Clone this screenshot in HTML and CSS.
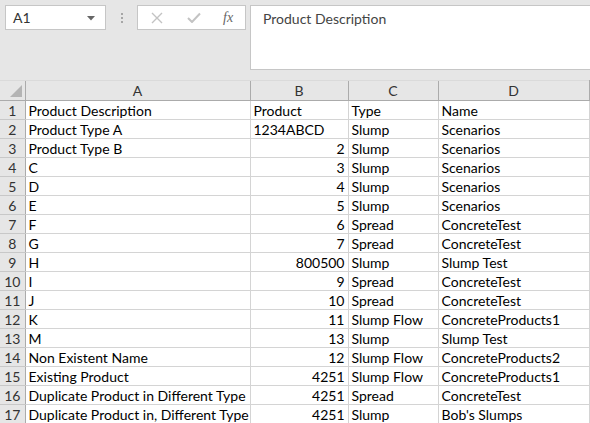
FILE: index.html
```html
<!DOCTYPE html>
<html lang="en">
<head>
    <meta charset="UTF-8">
    <title>Products</title>
    <link rel="stylesheet" href="styles.css">
</head>
<body>
    <div class="formula-bar">
        <div class="name-box">
            <span>A1</span>
            <svg class="arrow" width="8" height="5" viewBox="0 0 8 5"><path d="M0 0 H8 L4 4.5 Z" fill="#666"/></svg>
        </div>
        <div class="grip">
            <i></i><i></i><i></i>
        </div>
        <div class="fx-box">
            <svg width="12" height="12" viewBox="0 0 12 12"><path d="M1 1 L11 11 M11 1 L1 11" stroke="#c3c3c3" stroke-width="1.4" fill="none"/></svg>
            <svg width="14" height="11" viewBox="0 0 14 11"><path d="M1 6 L5 10 L13 1.5" stroke="#c3c3c3" stroke-width="2" fill="none"/></svg>
            <span class="fx">fx</span>
        </div>
        <div class="formula-input">Product Description</div>
    </div>

    <table class="sheet">
        <colgroup>
            <col class="col-rownum">
            <col class="col-a">
            <col class="col-b">
            <col class="col-c">
            <col class="col-d">
        </colgroup>
        <thead>
            <tr>
                <th class="corner"><span class="corner-tri"></span></th>
                <th>A</th>
                <th>B</th>
                <th>C</th>
                <th>D</th>
            </tr>
        </thead>
        <tbody id="rows"></tbody>
    </table>

    <script>
        // Dane arkusza
        const data = [
            ['Product Description', 'Product', 'Type', 'Name'],
            ['Product Type A', '1234ABCD', 'Slump', 'Scenarios'],
            ['Product Type B', 2, 'Slump', 'Scenarios'],
            ['C', 3, 'Slump', 'Scenarios'],
            ['D', 4, 'Slump', 'Scenarios'],
            ['E', 5, 'Slump', 'Scenarios'],
            ['F', 6, 'Spread', 'ConcreteTest'],
            ['G', 7, 'Spread', 'ConcreteTest'],
            ['H', 800500, 'Slump', 'Slump Test'],
            ['I', 9, 'Spread', 'ConcreteTest'],
            ['J', 10, 'Spread', 'ConcreteTest'],
            ['K', 11, 'Slump Flow', 'ConcreteProducts1'],
            ['M', 13, 'Slump', 'Slump Test'],
            ['Non Existent Name', 12, 'Slump Flow', 'ConcreteProducts2'],
            ['Existing Product', 4251, 'Slump Flow', 'ConcreteProducts1'],
            ['Duplicate Product in Different Type', 4251, 'Spread', 'ConcreteTest'],
            ['Duplicate Product in, Different Type', 4251, 'Slump', "Bob's Slumps"]
        ];

        const rows = document.getElementById('rows');
        data.forEach(function(row, i) {
            const tr = document.createElement('tr');
            const num = document.createElement('td');
            num.className = 'rownum';
            num.textContent = i + 1;
            tr.appendChild(num);
            row.forEach(function(value) {
                const td = document.createElement('td');
                // liczby wyrównane do prawej, tekst do lewej
                if (typeof value === 'number') td.className = 'num';
                td.textContent = value;
                tr.appendChild(td);
            });
            rows.appendChild(tr);
        });
    </script>
</body>
</html>
```

FILE: styles.css
```css
body {
    margin: 0;
    background-color: #e6e6e6;
    font-family: Lato, 'Open Sans', sans-serif;
    color: #000;
    overflow: hidden;
}
.formula-bar {
    display: flex;
    align-items: flex-start;
    padding: 5px 0 0 5px;
    height: 75px;
    box-sizing: border-box;
}
.name-box {
    width: 101px;
    height: 25px;
    box-sizing: border-box;
    background-color: white;
    border: 1px solid #c6c6c6;
    display: flex;
    align-items: center;
    justify-content: space-between;
    padding: 0 10px 0 7px;
    font-size: 14px;
    color: #333;
}
.arrow {
    margin-top: 1px;
}
.grip {
    width: 31px;
    height: 25px;
    display: flex;
    flex-direction: column;
    align-items: center;
    justify-content: center;
    gap: 2px;
}
.grip i {
    display: block;
    width: 2px;
    height: 2px;
    background-color: #a6a6a6;
}
.fx-box {
    width: 109px;
    height: 25px;
    box-sizing: border-box;
    background-color: white;
    border: 1px solid #c6c6c6;
    display: flex;
    align-items: center;
    padding: 0 0 0 13px;
    gap: 24px;
}
.fx {
    font-family: 'Liberation Serif', serif;
    font-style: italic;
    font-size: 14px;
    color: #666;
    margin-left: -2px;
}
.formula-input {
    flex: 1;
    margin-left: 4px;
    height: 65px;
    box-sizing: border-box;
    background-color: white;
    border: 1px solid #c6c6c6;
    border-right: none;
    padding: 4px 0 0 12px;
    font-size: 14px;
    color: #444;
}
.sheet {
    border-collapse: collapse;
    table-layout: fixed;
    width: 589px;
    margin-top: 5px;
    font-size: 14px;
}
.col-rownum { width: 25px; }
.col-a { width: 225px; }
.col-b { width: 98px; }
.col-c { width: 90px; }
.col-d { width: 151px; }
.sheet th {
    height: 19px;
    padding: 0;
    font-weight: normal;
    color: #333;
    background-color: #e6e6e6;
    border-left: 1px solid #ababab;
    border-bottom: 1px solid #ababab;
    border-top: 1px solid #dadada;
}
.sheet th:last-child {
    border-right: 1px solid #ababab;
}
.sheet th.corner {
    border-left: none;
    position: relative;
}
.corner-tri {
    position: absolute;
    right: 3px;
    bottom: 3px;
    width: 0;
    height: 0;
    border-left: 12px solid transparent;
    border-bottom: 12px solid #b4b4b4;
}
.sheet td {
    height: 18px;
    padding: 0 3px;
    background-color: white;
    border-right: 1px solid #d4d4d4;
    border-bottom: 1px solid #d4d4d4;
    white-space: nowrap;
    overflow: hidden;
}
.sheet td.num {
    text-align: right;
}
.sheet td.rownum {
    padding: 0;
    text-align: center;
    background-color: #e6e6e6;
    color: #333;
    border-right: 1px solid #ababab;
    border-bottom: 1px solid #c8c8c8;
}
```
